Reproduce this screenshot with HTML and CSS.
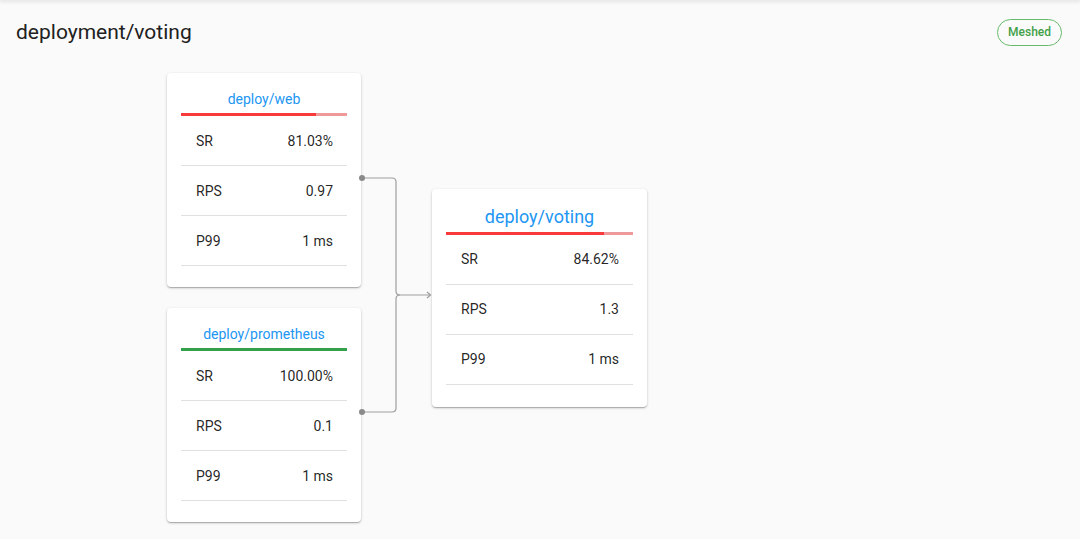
FILE: index.html
```html
<!DOCTYPE html>
<html>
<head>
<meta charset="utf-8">
<link rel="stylesheet" href="styles.css">
</head>
<body>
<div class="topshade"></div>
<header class="header">
  <h1 class="title">deployment/voting</h1>
  <span class="badge">Meshed</span>
</header>
<main class="graph">
  <div class="sources">
    <section class="card">
      <div class="card-title">deploy/web</div>
      <div class="bar"><div class="bar-fill bar-red" style="width:81.03%"></div></div>
      <div class="row"><span>SR</span><span>81.03%</span></div>
      <div class="row"><span>RPS</span><span>0.97</span></div>
      <div class="row"><span>P99</span><span>1 ms</span></div>
    </section>
    <section class="card">
      <div class="card-title">deploy/prometheus</div>
      <div class="bar"><div class="bar-fill bar-green" style="width:100%"></div></div>
      <div class="row"><span>SR</span><span>100.00%</span></div>
      <div class="row"><span>RPS</span><span>0.1</span></div>
      <div class="row"><span>P99</span><span>1 ms</span></div>
    </section>
  </div>
  <svg class="links" width="71" height="449" viewBox="0 0 71 449">
    <path d="M1 105 H31 Q35 105 35 109 V218 Q35 222 39 222 H69" fill="none" stroke="#9e9e9e" stroke-width="1.2"/>
    <path d="M1 339 H31 Q35 339 35 335 V226 Q35 222 39 222" fill="none" stroke="#9e9e9e" stroke-width="1.2"/>
    <path d="M66 219 L69.5 222 L66 225" fill="none" stroke="#9e9e9e" stroke-width="1.2"/>
    <circle cx="1" cy="105" r="3" fill="#8a8a8a"/>
    <circle cx="1" cy="339" r="3" fill="#8a8a8a"/>
  </svg>
  <section class="card card-main">
    <div class="card-title">deploy/voting</div>
    <div class="bar"><div class="bar-fill bar-red" style="width:84.62%"></div></div>
    <div class="row"><span>SR</span><span>84.62%</span></div>
    <div class="row"><span>RPS</span><span>1.3</span></div>
    <div class="row"><span>P99</span><span>1 ms</span></div>
  </section>
</main>
</body>
</html>
```
FILE: styles.css
```css
html, body {
  margin: 0;
  padding: 0;
  background: #fafafa;
  font-family: Roboto, "Liberation Sans", Arial, sans-serif;
  color: rgba(0, 0, 0, 0.87);
  height: 100%;
  overflow: hidden;
}
.topshade {
  height: 0;
  box-shadow: 0 0 4px 1px rgba(0, 0, 0, 0.18);
}
.header {
  display: flex;
  justify-content: space-between;
  align-items: flex-start;
  padding: 18px 18px 0 16px;
}
.title {
  margin: 0;
  font-size: 21px;
  font-weight: 400;
  line-height: 28px;
  color: #212121;
}
.badge {
  display: inline-block;
  box-sizing: border-box;
  height: 27px;
  line-height: 25px;
  margin-top: 1px;
  padding: 0 10px;
  border: 1px solid #66bb6a;
  border-radius: 14px;
  font-size: 12px;
  color: #43a047;
  font-weight: 500;
}
.graph {
  display: flex;
  align-items: center;
  padding: 27px 0 0 167px;
}
.sources {
  display: flex;
  flex-direction: column;
  gap: 21px;
}
.links {
  display: block;
  overflow: visible;
  flex: none;
}
.card {
  box-sizing: border-box;
  width: 194px;
  background: #fff;
  border-radius: 4px;
  padding: 16px 14px 21px;
  box-shadow: 0 1px 3px rgba(0, 0, 0, 0.2), 0 1px 1px rgba(0, 0, 0, 0.12), 0 2px 1px -1px rgba(0, 0, 0, 0.1);
}
.card-main {
  width: 215px;
  padding-bottom: 22px;
}
.card-title {
  text-align: center;
  font-size: 14px;
  line-height: 20px;
  color: #2196f3;
  margin-bottom: 4px;
}
.card-main .card-title {
  font-size: 18px;
  line-height: 24px;
  margin-bottom: 3px;
}
.bar {
  height: 3px;
  background: #ef9a9a;
  display: flex;
}
.bar-fill {
  height: 100%;
}
.bar-red {
  background: #f83a3a;
}
.bar-green {
  background: #34a14a;
}
.row {
  box-sizing: border-box;
  height: 50px;
  display: flex;
  justify-content: space-between;
  align-items: center;
  padding: 0 14px 0 15px;
  border-bottom: 1px solid #e0e0e0;
  font-size: 14px;
}
```
